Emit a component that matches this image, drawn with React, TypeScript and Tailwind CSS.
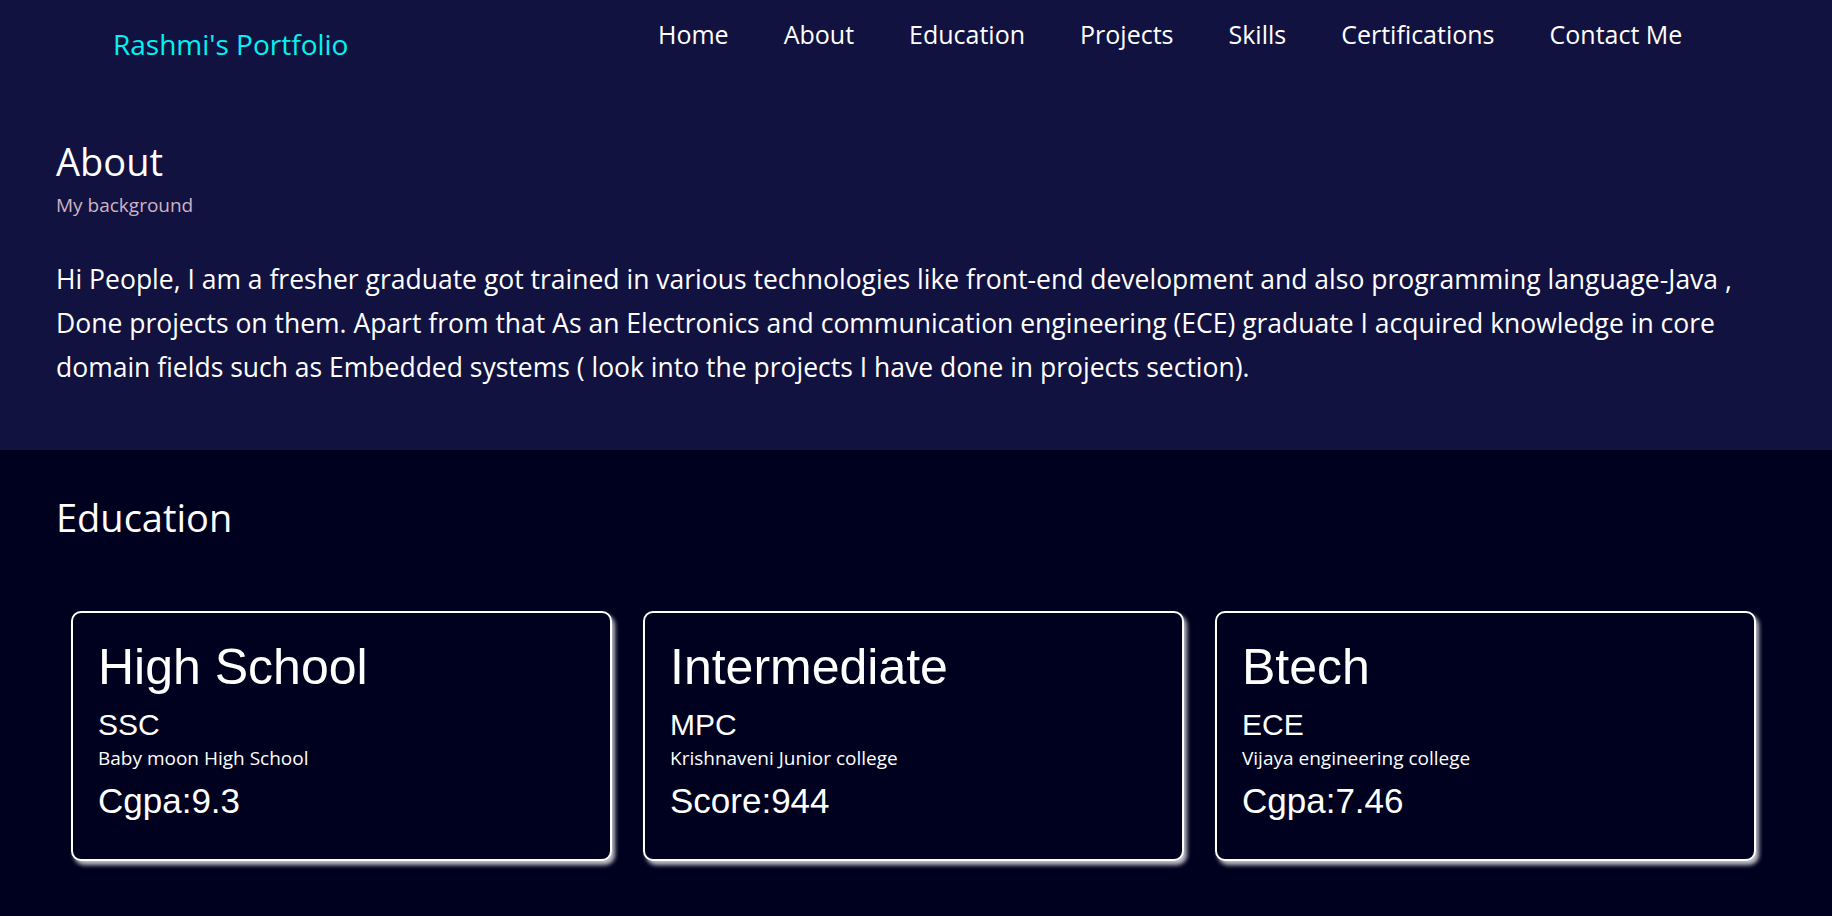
import React from "react";

const sans = { fontFamily: '"Open Sans", "Noto Sans", sans-serif' };
const arial = { fontFamily: '"Liberation Sans", Arial, sans-serif' };

const navItems = ["Home", "About", "Education", "Projects", "Skills", "Certifications", "Contact Me"];

const cards = [
  { title: "High School", sub: "SSC", school: "Baby moon High School", score: "Cgpa:9.3" },
  { title: "Intermediate", sub: "MPC", school: "Krishnaveni Junior college", score: "Score:944" },
  { title: "Btech", sub: "ECE", school: "Vijaya engineering college", score: "Cgpa:7.46" },
];

export default function App() {
  return (
    <div className="min-h-screen bg-[#00001f] text-white" style={sans}>
      <div className="bg-[#121240]">
        <header className="flex h-[90px] items-start">
          <div className="w-[658px] pl-[113px] pt-[25px] text-[28px] leading-[38px] text-[#00f2f2]">
            Rashmi's Portfolio
          </div>
          <nav className="flex gap-[55px] pt-[16px] text-[25px] leading-[36px]">
            {navItems.map((n) => (
              <a key={n} className="whitespace-nowrap">{n}</a>
            ))}
          </nav>
        </header>
        <section className="px-[56px] pt-[47px] pb-[61px]">
          <h2 className="text-[38px] leading-[48px]">About</h2>
          <p className="mt-[8px] text-[19px] leading-[24px] text-[#cdb4c4]">My background</p>
          <p className="mt-[40px] text-[26.5px] leading-[44px]">
            Hi People, I am a fresher graduate got trained in various technologies like front-end development and also programming language-Java , Done projects on them. Apart from that As an Electronics and communication engineering (ECE) graduate I acquired knowledge in core domain fields such as Embedded systems ( look into the projects I have done in projects section).
          </p>
        </section>
      </div>
      <section className="px-[56px] pt-[43px] pb-[57px]">
        <h2 className="text-[38px] leading-[48px]">Education</h2>
        <div className="mt-[70px] flex gap-[31px] pl-[15px]">
          {cards.map((c) => (
            <div
              key={c.title}
              className="w-[541px] rounded-[10px] border-2 border-white bg-[#00001f] px-[25px] pt-[25px] pb-[38px] shadow-[3px_4px_4px_rgba(255,255,255,0.75)]"
            >
              <div className="text-[50px] leading-[58px]" style={arial}>
                {c.title}
              </div>
              <div className="mt-[11px] text-[30px] leading-[36px]" style={arial}>
                {c.sub}
              </div>
              <div className="mt-[4px] text-[19px] leading-[22px]">{c.school}</div>
              <div className="mt-[12px] text-[35px] leading-[40px]" style={arial}>
                {c.score}
              </div>
            </div>
          ))}
        </div>
      </section>
    </div>
  );
}
